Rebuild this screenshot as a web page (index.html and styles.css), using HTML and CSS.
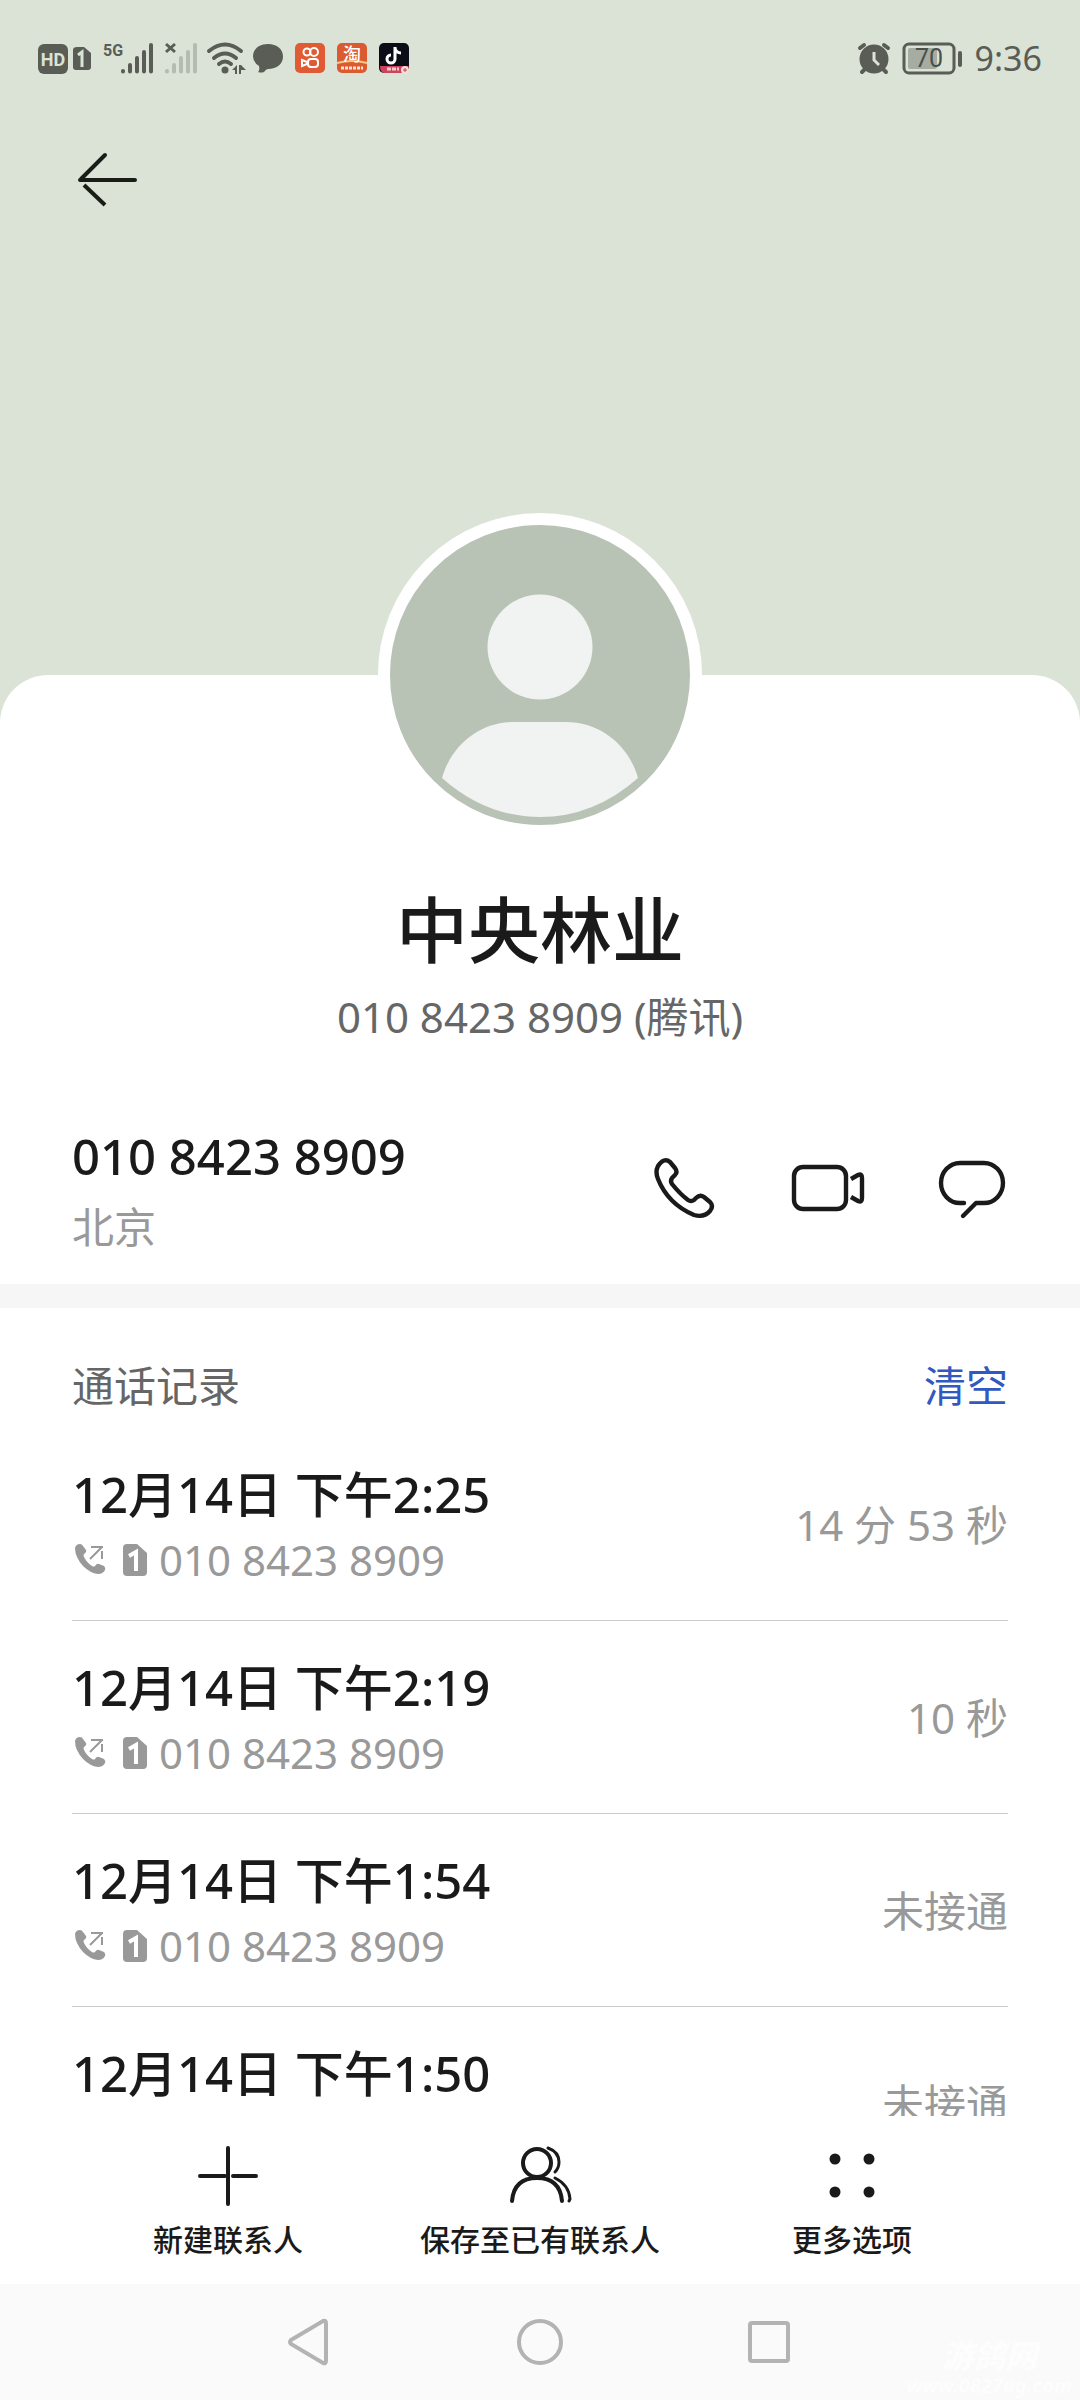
FILE: index.html
```html
<!DOCTYPE html>
<html lang="zh-CN">
<head>
<meta charset="utf-8">
<meta name="viewport" content="width=device-width, initial-scale=1">
<title>中央林业</title>
<link rel="stylesheet" href="styles.css">
</head>
<body>
<svg class="sprite" aria-hidden="true">
  <symbol id="i-outgoing" viewBox="0 0 36 36">
    <path fill="currentColor" d="M3 6Q4 2 8 2Q10 2 11 4L14 8Q15 10 12 12Q11 13 12 15Q15 21 20 24Q22 25 23 24Q25 21 27 22L32 24Q34 26 33 28Q31 32 26 32Q18 31 11 24Q3 15 3 6Z"/>
    <path fill="none" stroke="currentColor" stroke-width="2" d="M18 17L30 5M19 5H31M30 9V17"/>
  </symbol>
  <symbol id="i-sim" viewBox="0 0 24 32">
    <path fill="currentColor" d="M4 0H14L24 9V28Q24 32 20 32H4Q0 32 0 28V4Q0 0 4 0Z"/>
    <path fill="none" stroke="#fff" stroke-width="4" d="M6 12L13 8V27"/>
  </symbol>
</svg>
<div class="app">
  <header class="hero">
    <div class="status">
      <div class="status-group">
        <div class="hd">
          <svg width="30" height="32" viewBox="0 0 30 32"><rect y="2" width="30" height="30" rx="6" fill="#595d56"/><text x="15" y="24" text-anchor="middle" class="hd-text">HD</text></svg>
          <svg width="18" height="32" viewBox="0 0 18 32"><path fill="#595d56" d="M4 5H11L18 11V25Q18 28 15 28H3Q0 28 0 25V8Q0 5 4 5Z"/><path d="M5 13L9 10V25" fill="none" stroke="#dbe3d6" stroke-width="3"/></svg>
        </div>
        <svg width="50" height="32" viewBox="0 0 50 32"><text x="0" y="14" class="net-text">5G</text><g stroke="#595d56" stroke-width="4" stroke-linecap="round"><path d="M20 29V29.500M27 23V29.500M34 16V29.500M41 10V29.500M48 3V29.500"/></g></svg>
        <svg width="32" height="32" viewBox="0 0 32 32"><g stroke="#b4bbb0" stroke-width="4" stroke-linecap="round"><path d="M2 29V29.500M9 23V29.500M16 16V29.500M23 10V29.500M30 3V29.500"/></g><path d="M1 2L10 10M10 2L1 10" stroke="#595d56" stroke-width="3"/></svg>
        <svg width="34" height="32" viewBox="0 0 34 32"><g fill="none" stroke="#595d56" stroke-width="4" stroke-linecap="round"><path d="M0 9Q16 -4 32 9M5 16Q16 7 27 16M10 22Q16 17 22 22"/></g><circle cx="16" cy="28" r="3.500" fill="#595d56"/><path fill="#595d56" d="M23 28L28 23V32H26V28ZM30 23H32L37 28H32V32H30Z"/></svg>
        <svg width="28" height="32" viewBox="0 0 28 32"><path fill="#595d56" d="M13 2C22 2 28 7 28 14.500S22 27 13 27Q11 27 9 30Q6 31 3 30Q5 28 4 24Q-2 20 -2 14.500C-2 7 4 2 13 2Z"/></svg>
        <svg width="30" height="32" viewBox="0 0 30 32"><rect y="1" width="30" height="30" rx="5" fill="#e05a33"/><g fill="none" stroke="#fff" stroke-width="2"><circle cx="12" cy="10" r="3.500"/><circle cx="19" cy="10" r="4"/><rect x="13" y="17" width="10" height="8" rx="3"/><path d="M12 20L7 18V24L12 22Z"/></g></svg>
        <svg width="30" height="32" viewBox="0 0 30 32"><rect y="1" width="30" height="30" rx="5" fill="#dc5a30"/><path d="M0 21Q15 17 30 21" stroke="#f3c98b" stroke-width="2" fill="none"/><text x="15" y="19" text-anchor="middle" class="tao-text">淘</text><path d="M4 26H26" stroke="#fbe5d2" stroke-width="3" stroke-dasharray="3 1"/></svg>
        <svg width="30" height="32" viewBox="0 0 30 32"><rect y="1" width="30" height="30" rx="5" fill="#0c0c16"/><path d="M1 24H30L26 31H5Q1 30 1 24Z" fill="#c9445c"/><path d="M8 27H20" stroke="#f5c7cc" stroke-width="3" stroke-dasharray="4 1"/><circle cx="26" cy="28" r="4" fill="#f7dcd8"/><path d="M24 28H28M26 26V30" stroke="#c9445c"/><path d="M16 5V17A4 4 0 1 1 12 13M16 6Q17 11 22 11" fill="none" stroke="#fff" stroke-width="3"/></svg>
      </div>
      <div class="status-group">
        <svg width="34" height="32" viewBox="0 0 34 32"><circle cx="17" cy="17" r="14.500" fill="#595d56"/><g stroke="#595d56" stroke-width="4" stroke-linecap="round"><path d="M3 6L7 3M27 3L31 6M8 27L5 30M26 27L29 30"/></g><path d="M17 10V18L22 23" fill="none" stroke="#dbe3d6" stroke-width="3"/></svg>
        <svg width="60" height="32" viewBox="0 0 60 32"><rect x="1" y="2" width="50" height="29" rx="5" fill="none" stroke="#595d56" stroke-width="3"/><rect x="5" y="6" width="29" height="21" rx="2" fill="#a5aca1"/><text x="26" y="25" text-anchor="middle" class="battery-text">70</text><rect x="55" y="9" width="4" height="16" rx="2" fill="#595d56"/></svg>
        <span class="clock">9:36</span>
      </div>
    </div>
    <button class="back" aria-label="返回"><svg width="64" height="64" viewBox="0 0 64 64"><g fill="none" stroke="#1a1c18" stroke-width="4" stroke-linecap="round"><path d="M29 7L5 31M4 32H59"/></g><path d="M8 37L29 57" stroke="#1a1c18" stroke-width="4"/></svg></button>
  </header>

  <main class="card">
    <div class="avatar"><svg viewBox="0 0 300 300"><circle cx="150" cy="122" r="52.500" fill="#f0f3f1"/><path fill="#f0f3f1" d="M124 197H176C211 197 239 221 248 253Q204 292 150 292Q96 292 52 253C61 221 89 197 124 197Z"/></svg></div>
    <h1 class="name">中央林业</h1>
    <p class="caption">010 8423 8909 (腾讯)</p>

    <section class="phone-row">
      <div class="phone-info">
        <p class="title">010 8423 8909</p>
        <p class="muted">北京</p>
      </div>
      <div class="actions">
        <button aria-label="拨打电话"><svg width="72" height="72" viewBox="0 0 72 72"><path class="line" d="M10 14Q16 5 22 10L27 16Q30 20 27 23L24 26Q22 29 24 32Q32 42 40 48Q43 50 46 48L48 46Q52 42 56 45L62 50Q66 54 62 59Q56 66 46 63Q20 52 10 27Q7 20 10 14Z"/></svg></button>
        <button aria-label="视频通话"><svg width="72" height="72" viewBox="0 0 72 72"><rect class="line" x="2" y="15" width="52" height="42" rx="9"/><path class="line butt" d="M59 27L66 23Q70 21 70 26V46Q70 51 66 49L59 45"/></svg></button>
        <button aria-label="发送信息"><svg width="72" height="72" viewBox="0 0 72 72"><path class="line" d="M28 51H24A19 20 0 0 1 24 11H48A19 20 0 0 1 48 51H40L27 64"/></svg></button>
      </div>
    </section>

    <section class="log">
      <div class="log-head">
        <h2>通话记录</h2>
        <button class="clear">清空</button>
      </div>
      <ul class="calls">
        <li>
          <div><p class="title">12月14日 下午2:25</p><p class="meta"><svg width="36" height="36"><use href="#i-outgoing"/></svg><svg class="sim" width="24" height="32"><use href="#i-sim"/></svg>010 8423 8909</p></div>
          <span class="duration">14 分 53 秒</span>
        </li>
        <li>
          <div><p class="title">12月14日 下午2:19</p><p class="meta"><svg width="36" height="36"><use href="#i-outgoing"/></svg><svg class="sim" width="24" height="32"><use href="#i-sim"/></svg>010 8423 8909</p></div>
          <span class="duration">10 秒</span>
        </li>
        <li>
          <div><p class="title">12月14日 下午1:54</p><p class="meta"><svg width="36" height="36"><use href="#i-outgoing"/></svg><svg class="sim" width="24" height="32"><use href="#i-sim"/></svg>010 8423 8909</p></div>
          <span class="duration">未接通</span>
        </li>
        <li>
          <div><p class="title">12月14日 下午1:50</p></div>
          <span class="duration">未接通</span>
        </li>
      </ul>
    </section>
  </main>

  <div class="toolbar">
    <button><svg width="72" height="72" viewBox="0 0 72 72"><path class="line" d="M36 8V64M8 36H33M41 36H64"/></svg>新建联系人</button>
    <button><svg width="72" height="72" viewBox="0 0 72 72"><g class="line"><circle cx="33" cy="23" r="14"/><path d="M8 61Q10 38 33 38Q56 38 58 61"/></g><path class="line thin" d="M44 8Q55 12 55 22Q55 28 51 32M51 38Q65 45 66 59L65 61"/></svg>保存至已有联系人</button>
    <button><svg width="72" height="72" viewBox="0 0 72 72"><g fill="#1a1a1a"><circle cx="19" cy="19" r="5.500"/><circle cx="53" cy="19" r="5.500"/><circle cx="19" cy="52" r="5.500"/><circle cx="53" cy="52" r="5.500"/></g></svg>更多选项</button>
  </div>

  <nav class="sysnav">
    <button aria-label="返回"><svg width="48" height="48" viewBox="0 0 48 48"><path class="nav-line" d="M5 22L37 3Q40 2 40 5V43Q40 46 37 45L5 26Q3 24 5 22Z"/></svg></button>
    <button aria-label="主屏幕"><svg width="48" height="48" viewBox="0 0 48 48"><circle class="nav-line" cx="24" cy="24" r="21"/></svg></button>
    <button aria-label="最近任务"><svg width="48" height="48" viewBox="0 0 48 48"><rect class="nav-line" x="4" y="5" width="38" height="38" rx="2"/></svg></button>
    <div class="watermark"><strong>游鸽网</strong><span>www.0827ug.com</span></div>
  </nav>
</div>
</body>
</html>
```

FILE: styles.css
```css
* { box-sizing: border-box; }

body, h1, h2, p, ul { margin: 0; padding: 0; }

body {
  font-family: "Noto Sans", "Noto Sans CJK SC", sans-serif;
  font-size: 42px;
  line-height: 60px;
  color: #1a1a1a;
  background: #fff;
}

button {
  padding: 0;
  border: 0;
  background: none;
  font: inherit;
  color: inherit;
}

svg { display: block; flex: none; overflow: visible; }

.sprite { position: absolute; width: 0; height: 0; }

.app {
  display: flex;
  flex-direction: column;
  height: 100vh;
  background: #dbe3d6;
}

/* Header */
.hero { flex: none; height: 675px; padding: 42px 38px; }

.status, .status-group, .hd { display: flex; align-items: center; }
.status { justify-content: space-between; height: 32px; }
.status-group { gap: 12px; }
.hd { gap: 5px; }

.hd-text { font: 700 18px "Roboto", sans-serif; fill: #dbe3d6; }
.net-text { font: 700 16px "Liberation Sans Narrow", "Roboto", sans-serif; fill: #595d56; }
.tao-text { font: 500 18px "Noto Sans CJK SC", sans-serif; fill: #fff; }
.battery-text { font: 400 25px "Roboto", sans-serif; fill: #4c504a; }
.clock { font-size: 34px; line-height: 32px; color: #595d56; }

.back { display: block; margin: 74px 38px 0; }

/* Contact card */
.card {
  flex: 1;
  min-height: 0;
  display: flex;
  flex-direction: column;
  border-radius: 48px 48px 0 0;
  background: #fff;
}

.avatar {
  flex: none;
  align-self: center;
  width: 324px;
  height: 324px;
  margin-top: -162px;
  border: 12px solid #fff;
  border-radius: 50%;
  background: #b8c2b5;
}

.name {
  margin-top: 44px;
  font-size: 72px;
  font-weight: 500;
  line-height: 96px;
  text-align: center;
}

.caption { margin-top: 10px; color: #666; text-align: center; }

.phone-row {
  display: flex;
  justify-content: space-between;
  padding: 79px 72px 27px;
}

.phone-info { display: flex; flex-direction: column; gap: 11px; }
.title { font-size: 49px; font-weight: 500; }
.muted { color: #999; }

.actions { display: flex; align-items: flex-start; gap: 72px; padding-top: 26px; }

.line {
  fill: none;
  stroke: #1a1a1a;
  stroke-width: 4;
  stroke-linecap: round;
  stroke-linejoin: round;
}
.actions .line { stroke-width: 4.4; }
.line.butt { stroke-linecap: butt; }
.line.thin { stroke-width: 3; }

/* Call log */
.log {
  flex: 1;
  min-height: 0;
  overflow: hidden;
  border-top: 24px solid #f6f6f6;
  padding: 48px 72px 0;
}

.log-head { display: flex; justify-content: space-between; padding-bottom: 12px; }
.log-head h2 { font-size: 42px; font-weight: 400; color: #666; }
.clear { color: #3159c0; }

.calls { list-style: none; }
.calls li {
  display: flex;
  justify-content: space-between;
  height: 193px;
  padding-top: 36px;
  border-bottom: 1px solid #ccc;
}
.meta { display: flex; align-items: center; margin-top: 6px; color: #999; }
.sim { margin: 0 12px 0 15px; }
.duration { margin-top: 31px; color: #999; }

/* Bottom toolbar */
.toolbar {
  flex: none;
  display: grid;
  grid-template-columns: repeat(3, 1fr);
  padding: 24px 72px;
  background: #fff;
}
.toolbar button {
  display: flex;
  flex-direction: column;
  align-items: center;
  gap: 8px;
  font-size: 30px;
  font-weight: 500;
  line-height: 40px;
  white-space: nowrap;
}

/* System navigation */
.sysnav {
  position: relative;
  flex: none;
  display: grid;
  grid-template-columns: repeat(3, 1fr);
  height: 116px;
  padding: 0 18%;
  background: #fafafa;
}
.sysnav button { display: grid; place-items: center; }
.nav-line { fill: none; stroke: #b3b3b3; stroke-width: 4; }

.watermark {
  position: absolute;
  right: 8px;
  bottom: 2px;
  display: flex;
  flex-direction: column;
  align-items: center;
  font-size: 20px;
  font-style: italic;
  font-weight: 700;
  line-height: 24px;
  color: #fdfdfd;
}
.watermark strong { font-size: 32px; line-height: 36px; }
```
